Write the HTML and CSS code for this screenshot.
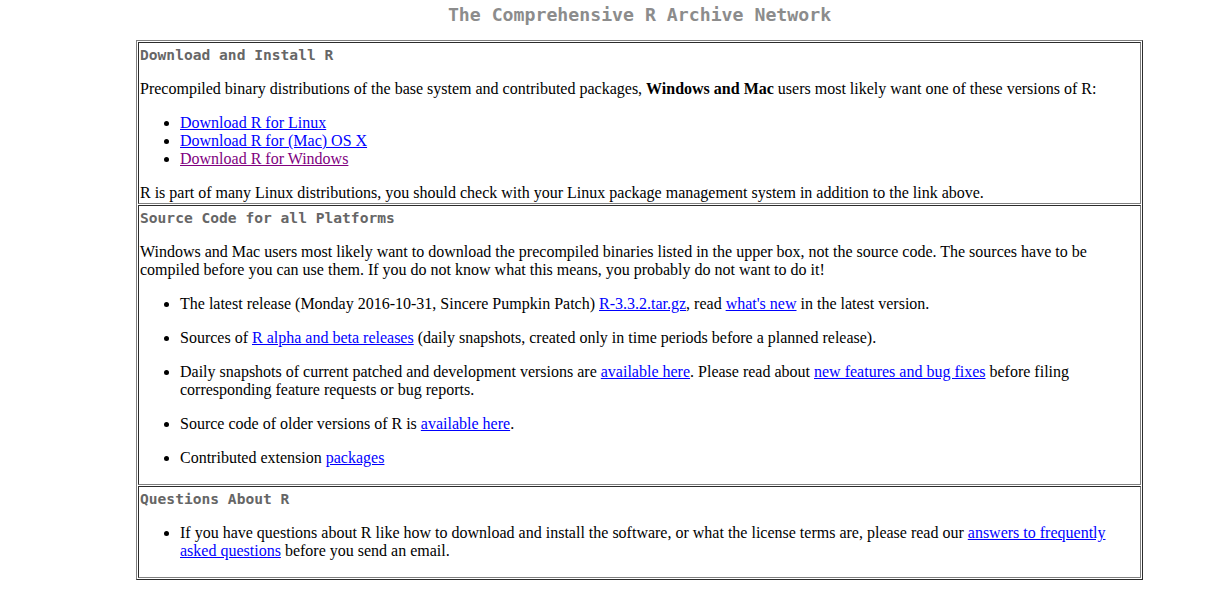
FILE: index.html
```
<!DOCTYPE html>
<html lang="en">
<head>
    <meta charset="UTF-8">
    <title>The Comprehensive R Archive Network</title>
    <link rel="stylesheet" href="styles.css">
</head>
<body>
    <div class="page">
        <h1>The Comprehensive R Archive Network</h1>
        <table class="frame">
            <tr>
                <td>
                    <h2>Download and Install R</h2>
                    <p>Precompiled binary distributions of the base system and contributed packages, <strong>Windows and Mac</strong> users most likely want one of these versions of R:</p>
                    <ul>
                        <li><a href="#">Download R for Linux</a></li>
                        <li><a href="#">Download R for (Mac) OS X</a></li>
                        <li><a href="#" class="visited">Download R for Windows</a></li>
                    </ul>
                    R is part of many Linux distributions, you should check with your Linux package management system in addition to the link above.
                </td>
            </tr>
            <tr>
                <td>
                    <h2>Source Code for all Platforms</h2>
                    <p>Windows and Mac users most likely want to download the precompiled binaries listed in the upper box, not the source code. The sources have to be compiled before you can use them. If you do not know what this means, you probably do not want to do it!</p>
                    <ul>
                        <li><p>The latest release (Monday 2016-10-31, Sincere Pumpkin Patch) <a href="#">R-3.3.2.tar.gz</a>, read <a href="#">what's new</a> in the latest version.</p></li>
                        <li><p>Sources of <a href="#">R alpha and beta releases</a> (daily snapshots, created only in time periods before a planned release).</p></li>
                        <li><p>Daily snapshots of current patched and development versions are <a href="#">available here</a>. Please read about <a href="#">new features and bug fixes</a> before filing corresponding feature requests or bug reports.</p></li>
                        <li><p>Source code of older versions of R is <a href="#">available here</a>.</p></li>
                        <li><p>Contributed extension <a href="#">packages</a></p></li>
                    </ul>
                </td>
            </tr>
            <tr>
                <td>
                    <h2>Questions About R</h2>
                    <ul>
                        <li><p>If you have questions about R like how to download and install the software, or what the license terms are, please read our <a href="#">answers to frequently asked questions</a> before you send an email.</p></li>
                    </ul>
                </td>
            </tr>
        </table>
    </div>
</body>
</html>
```

FILE: styles.css
```
body { margin: 0; background: #fff; color: #000; font-family: "Liberation Serif", "Times New Roman", serif; font-size: 16px; }
a { color: #0000ff; }
a.visited { color: #800080; }
.page { width: 1007px; margin-left: 136px; padding-top: 4px; }
h1 { margin: 0 0 14px; font-family: "DejaVu Sans Mono", monospace; font-size: 18.2px; line-height: 22px; color: #8c8c8c; text-align: center; }
h2 { margin: 1px 0 0; font-family: "DejaVu Sans Mono", monospace; font-size: 14.6px; line-height: 19px; color: #666; }
.frame { width: 1007px; border: 1px outset gray; border-spacing: 1px; }
.frame td { border: 1px inset gray; padding: 1px; vertical-align: top; }
.frame p { margin: 16px 0; }
.frame ul { margin: 16px 0; padding-left: 40px; }
```
